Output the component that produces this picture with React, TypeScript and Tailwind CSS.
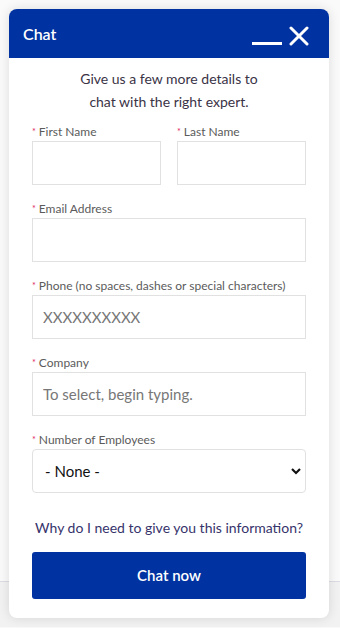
import React from 'react';

const font = { fontFamily: '"Lato", "Liberation Sans", sans-serif' };

interface FieldProps {
  label: string;
  children: React.ReactNode;
}

const Field: React.FC<FieldProps> = ({ label, children }) => (
  <div className="flex flex-col">
    <label className="mb-px flex h-4 items-center text-[12px] leading-4 text-[#5b5b5b]">
      <span className="mr-[3px] text-[9px] text-[#e0245e]">*</span>
      {label}
    </label>
    {children}
  </div>
);

const inputCls =
  'h-11 w-full border border-[#e1e1e1] bg-white px-[10px] text-[15px] text-[#333] placeholder:text-[#777] outline-none';

const App: React.FC = () => {
  return (
    <div className="relative h-[628px] w-[340px] overflow-hidden bg-[#f9f9f9]" style={font}>
      {/* page behind the widget */}
      <div className="h-[582px] border-b border-[#dcdce4] bg-[#fafafa]" />
      <div className="h-[45px] bg-[#f2f2f2]" />

      {/* chat widget */}
      <div className="absolute left-[9px] top-[9px] flex w-[320px] flex-col overflow-hidden rounded-lg bg-white shadow-[0_0_12px_rgba(0,0,0,0.12)]">
        <div className="flex h-[49px] items-center justify-between bg-[#0033a1] pl-[14px] pr-[20px]">
          <span className="text-[16px] font-semibold text-white">Chat</span>
          <div className="flex items-end gap-[7px] pt-[4px]">
            <span className="mb-[1px] block h-[3px] w-[30px] bg-white" />
            <svg width="20" height="20" viewBox="0 0 20 20">
              <path d="M2 2 L18 18 M18 2 L2 18" stroke="#fff" strokeWidth="3" strokeLinecap="round" />
            </svg>
          </div>
        </div>

        <div className="flex flex-col px-[23px] pb-[19px] pt-[9px]">
          <p className="text-center text-[14px] leading-[23px] text-[#3a3346]">
            Give us a few more details to
            <br />
            chat with the right expert.
          </p>

          <div className="mt-[11px] flex flex-col gap-4">
            <div className="grid grid-cols-2 gap-4">
              <Field label="First Name">
                <input className={inputCls} />
              </Field>
              <Field label="Last Name">
                <input className={inputCls} />
              </Field>
            </div>
            <Field label="Email Address">
              <input className={inputCls} />
            </Field>
            <Field label="Phone (no spaces, dashes or special characters)">
              <input className={inputCls} placeholder="XXXXXXXXXX" />
            </Field>
            <Field label="Company">
              <input className={inputCls} placeholder="To select, begin typing." />
            </Field>
            <Field label="Number of Employees">
              <div className="relative">
                <select className="h-11 w-full appearance-none rounded-[4px] border border-[#e1e1e1] bg-white pl-[12px] text-[15px] text-[#111] outline-none">
                  <option>- None -</option>
                </select>
                <svg className="pointer-events-none absolute right-[4px] top-[16px]" width="12" height="12" viewBox="0 0 12 12">
                  <path d="M2 4 L6 8 L10 4" stroke="#111" strokeWidth="2.2" fill="none" />
                </svg>
              </div>
            </Field>
          </div>

          <p className="mt-[26px] text-center text-[14px] leading-[17px] text-[#36336b]">
            Why do I need to give you this information?
          </p>

          <button className="mt-[16px] h-[47px] w-full rounded-[3px] bg-[#0033a1] text-[15px] font-semibold text-white">
            Chat now
          </button>
        </div>
      </div>
    </div>
  );
};

export default App;
